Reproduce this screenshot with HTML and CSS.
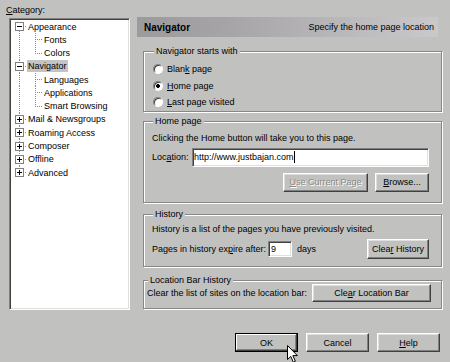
FILE: index.html
```html
<!DOCTYPE html>
<html lang="en">
<head>
  <meta charset="UTF-8">
  <title>Preferences</title>
  <link rel="stylesheet" href="styles.css">
</head>
<body>
  <div class="dialog">
    <div class="main">
      <aside class="category">
        <div class="category-label"><u>C</u>ategory:</div>
        <div class="tree">
          <div class="node"><span class="joint first"><span class="toggle minus"></span></span><span class="node-text">Appearance</span></div>
          <div class="node"><span class="pipe"></span><span class="branch"></span><span class="node-text">Fonts</span></div>
          <div class="node"><span class="pipe"></span><span class="branch last"></span><span class="node-text">Colors</span></div>
          <div class="node"><span class="joint"><span class="toggle minus"></span></span><span class="node-text selected">Navigator</span></div>
          <div class="node"><span class="pipe"></span><span class="branch"></span><span class="node-text">Languages</span></div>
          <div class="node"><span class="pipe"></span><span class="branch"></span><span class="node-text">Applications</span></div>
          <div class="node"><span class="pipe"></span><span class="branch last"></span><span class="node-text">Smart Browsing</span></div>
          <div class="node"><span class="joint"><span class="toggle plus"></span></span><span class="node-text">Mail &amp; Newsgroups</span></div>
          <div class="node"><span class="joint"><span class="toggle plus"></span></span><span class="node-text">Roaming Access</span></div>
          <div class="node"><span class="joint"><span class="toggle plus"></span></span><span class="node-text">Composer</span></div>
          <div class="node"><span class="joint"><span class="toggle plus"></span></span><span class="node-text">Offline</span></div>
          <div class="node"><span class="joint last"><span class="toggle plus"></span></span><span class="node-text">Advanced</span></div>
        </div>
      </aside>

      <section class="pane">
        <div class="pane-header">
          <b>Navigator</b>
          <span>Specify the home page location</span>
        </div>

        <fieldset class="group group-start">
          <legend>Navigator starts with</legend>
          <div class="radio-row"><span class="radio"></span><span>Blan<u>k</u> page</span></div>
          <div class="radio-row"><span class="radio checked"></span><span><u>H</u>ome page</span></div>
          <div class="radio-row"><span class="radio"></span><span><u>L</u>ast page visited</span></div>
        </fieldset>

        <fieldset class="group group-home">
          <legend>Home page</legend>
          <p class="note">Clicking the Home button will take you to this page.</p>
          <div class="field-row">
            <span class="field-label">Loc<u>a</u>tion:</span>
            <div class="textbox url"><span>http://www.justbajan.com</span><span class="caret"></span></div>
          </div>
          <div class="button-row">
            <span class="btn btn-current disabled"><span><u>U</u>se Current Page</span></span>
            <span class="btn btn-browse"><span><u>B</u>rowse...</span></span>
          </div>
        </fieldset>

        <fieldset class="group group-history">
          <legend>History</legend>
          <p class="note">History is a list of the pages you have previously visited.</p>
          <div class="field-row">
            <span>Pages in history ex<u>p</u>ire after:</span>
            <div class="textbox days">9</div>
            <span class="days-label">days</span>
            <span class="btn btn-history"><span>Clea<u>r</u> History</span></span>
          </div>
        </fieldset>

        <fieldset class="group group-bar">
          <legend>Location Bar History</legend>
          <div class="field-row">
            <span>Clear the list of sites on the location bar:</span>
            <span class="btn btn-bar"><span>Cle<u>a</u>r Location Bar</span></span>
          </div>
        </fieldset>
      </section>
    </div>

    <div class="actions">
      <span class="btn btn-action default"><span>OK</span></span>
      <span class="btn btn-action"><span>Cancel</span></span>
      <span class="btn btn-action"><span><u>H</u>elp</span></span>
    </div>

    <svg class="cursor" width="12" height="19" viewBox="0 0 12 19">
      <path d="M0.5 0.5 L0.5 14.5 L3.8 11.4 L6.3 17.2 L8.4 16.3 L5.9 10.6 L10.4 10.6 Z" fill="#fff" stroke="#000" stroke-width="1"/>
    </svg>
  </div>
</body>
</html>
```

FILE: styles.css
```css
body {
  margin: 0;
  background: #c1c2c0;
  font-family: "Liberation Sans", Arial, sans-serif;
  font-size: 9px;
  color: #000;
}
u {
  text-decoration: underline;
  text-underline-offset: 1px;
}
.dialog {
  position: relative;
  width: 450px;
  height: 362px;
  display: flex;
  flex-direction: column;
  overflow: hidden;
}
.main {
  display: flex;
  height: 312px;
}

/* left column: category tree */
.category {
  width: 137px;
  flex: none;
  box-sizing: border-box;
  padding: 5px 0 0 6px;
}
.category-label {
  height: 13px;
  line-height: 11px;
}
.tree {
  margin-left: 3px;
  width: 121px;
  height: 292px;
  box-sizing: border-box;
  padding: 1px 0 0 1px;
  background: #fff;
  border: 1px solid;
  border-color: #808080 #fff #fff #808080;
  box-shadow: inset 1px 1px #404040, inset -1px -1px #dfdfdf;
}
.node {
  display: flex;
  align-items: center;
  height: 13.27px;
}
.joint,
.pipe,
.branch {
  flex: none;
  width: 16px;
  height: 100%;
  display: flex;
  align-items: center;
  background-repeat: no-repeat;
}
.pipe {
  background-image: repeating-linear-gradient(to bottom, #8a8a8a 0 1px, transparent 1px 2px);
  background-position: 8px 0;
  background-size: 1px 100%;
}
.joint,
.branch {
  background-image:
    repeating-linear-gradient(to right, #8a8a8a 0 1px, transparent 1px 2px),
    repeating-linear-gradient(to bottom, #8a8a8a 0 1px, transparent 1px 2px);
  background-position: 8px 50%, 8px 0;
  background-size: 8px 1px, 1px 100%;
}
.joint.first {
  background-position: 8px 50%, 8px 100%;
  background-size: 8px 1px, 1px 50%;
}
.joint.last,
.branch.last {
  background-position: 8px 50%, 8px 0;
  background-size: 8px 1px, 1px 50%;
}
.toggle {
  width: 9px;
  height: 9px;
  margin-left: 4px;
  box-sizing: border-box;
  border: 1px solid #808080;
  background: #fff;
  background-repeat: no-repeat;
}
.toggle.minus {
  background-image: linear-gradient(#000, #000);
  background-position: 1px 3px;
  background-size: 5px 1px;
}
.toggle.plus {
  background-image: linear-gradient(#000, #000), linear-gradient(#000, #000);
  background-position: 1px 3px, 3px 1px;
  background-size: 5px 1px, 1px 5px;
}
.node-text {
  padding: 0 1px;
  line-height: 12px;
  white-space: nowrap;
}
.node-text.selected {
  background: #c4c4c4;
}

/* right pane */
.pane {
  width: 306px;
  flex: none;
  box-sizing: border-box;
  padding-top: 17px;
}
.pane-header {
  width: 301px;
  height: 20px;
  box-sizing: border-box;
  padding: 0 4px 0 7px;
  display: flex;
  align-items: center;
  justify-content: space-between;
  background: linear-gradient(to right, #9c9a9c, #a6a4a6 30%, #cbc8cb);
}
.pane-header b {
  font-size: 10px;
}
.group {
  margin: 0 0 0 6px;
  width: 299px;
  min-width: 0;
  box-sizing: border-box;
  border: 1px solid #878787;
  box-shadow: inset 1px 1px #fff, 1px 1px #fff;
}
.group legend {
  margin-left: 1px;
  padding: 0 2px;
  line-height: 11px;
  background: #c1c2c0;
}
.note {
  margin: 0;
  line-height: 12px;
}
.group-start {
  margin-top: 9px;
  padding: 4px 0 0 9px;
}
.radio-row {
  display: flex;
  align-items: center;
  gap: 4px;
  height: 16.5px;
}
.radio {
  width: 10px;
  height: 10px;
  box-sizing: border-box;
  border: 1px solid;
  border-color: #808080 #fff #fff #808080;
  border-radius: 50%;
  background: #fff;
  box-shadow: inset 1px 1px #404040;
}
.radio.checked {
  background: radial-gradient(circle, #000 0 1.6px, #fff 2.2px);
}
.group-home {
  margin-top: 4px;
  padding: 5px 12px 10px 8px;
}
.field-row {
  display: flex;
  align-items: center;
}
.group-home .field-row {
  margin-top: 4px;
}
.field-label {
  width: 40px;
  flex: none;
}
.textbox {
  box-sizing: border-box;
  display: flex;
  align-items: center;
  background: #fff;
  border: 1px solid;
  border-color: #808080 #fff #fff #808080;
  box-shadow: inset 1px 1px #404040, inset -1px -1px #dfdfdf;
}
.textbox.url {
  flex: 1;
  height: 19px;
  padding-left: 1px;
}
.caret {
  width: 1px;
  height: 12px;
  background: #000;
}
.button-row {
  display: flex;
  justify-content: flex-end;
  gap: 7px;
  margin-top: 6px;
}
.btn {
  display: flex;
  align-items: center;
  justify-content: center;
  box-sizing: border-box;
  height: 19px;
  white-space: nowrap;
  background: #c1c2c0;
  border: 1px solid;
  border-color: #fff #404040 #404040 #fff;
  box-shadow: inset -1px -1px #808080, inset 1px 1px #dfdfdf;
}
.btn.disabled {
  color: #8a8a8a;
  text-shadow: 1px 1px #fff;
}
.btn-current {
  width: 85px;
}
.btn-browse {
  width: 54px;
}
.group-history {
  margin-top: 6px;
  padding: 3px 12px 7px 8px;
}
.group-history .field-row {
  margin-top: 4px;
}
.textbox.days {
  width: 24px;
  height: 16px;
  margin-left: 2px;
  padding-left: 2px;
}
.days-label {
  margin-left: 5px;
}
.btn-history {
  margin-left: auto;
  width: 62px;
  height: 20px;
}
.group-bar {
  margin-top: 8px;
  padding: 0 10px 6px 3px;
}
.group-bar .field-row {
  margin-top: -2px;
}
.btn-bar {
  margin-left: auto;
  width: 119px;
  height: 18px;
}

/* bottom buttons */
.actions {
  display: flex;
  justify-content: flex-end;
  gap: 8px;
  margin-top: 21px;
  padding-right: 10px;
}
.btn-action {
  width: 63px;
}
.btn.default {
  border-color: #000;
  box-shadow: inset -1px -1px #404040, inset 1px 1px #fff, inset -2px -2px #808080;
}
.cursor {
  position: absolute;
  left: 287px;
  top: 345px;
}
```
